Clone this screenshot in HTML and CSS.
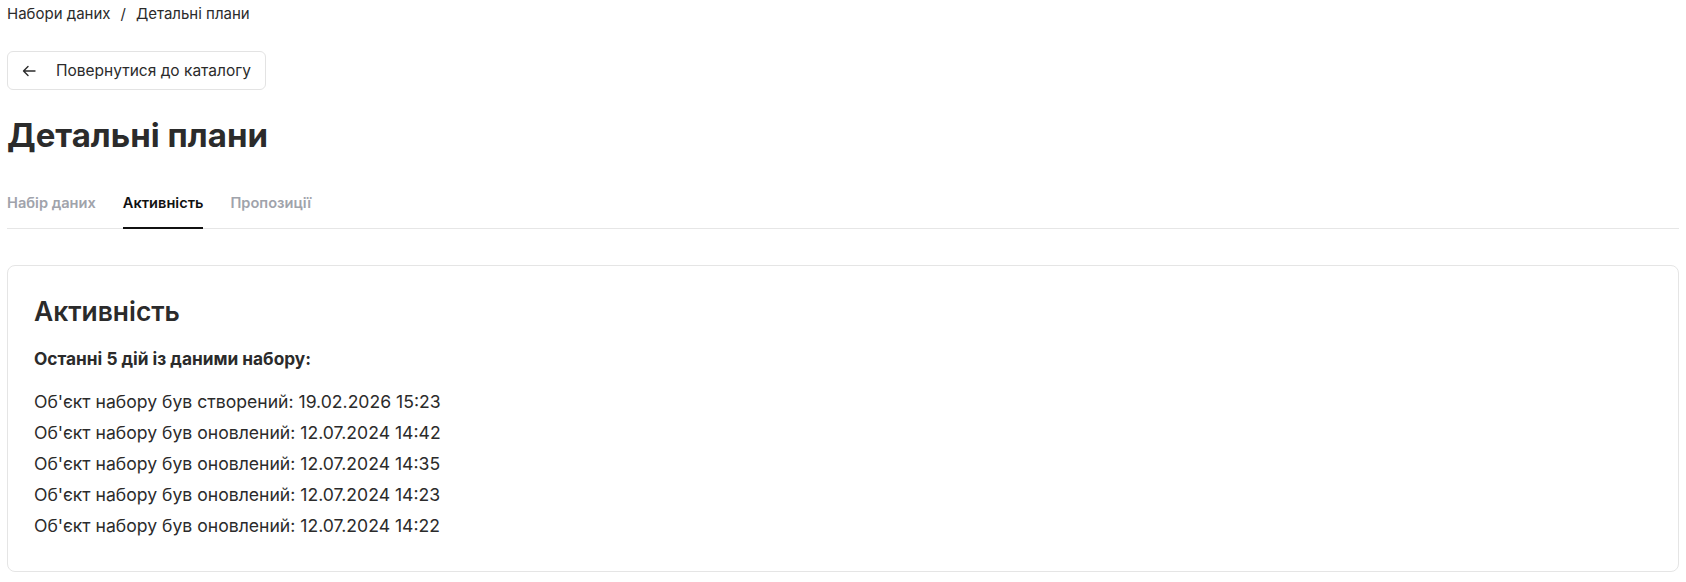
FILE: index.html
```html
<!DOCTYPE html>
<html lang="uk">
<head>
<meta charset="utf-8">
<title>Детальні плани</title>
<link rel="stylesheet" href="styles.css">
</head>
<body>
<div class="page">
  <nav class="breadcrumb">
    <span>Набори даних</span>
    <span class="sep">/</span>
    <span>Детальні плани</span>
  </nav>
  <button class="back-btn" type="button">
    <svg class="back-icon" width="16" height="16" viewBox="0 0 16 16" fill="none" stroke="currentColor" stroke-width="1.4" stroke-linecap="round" stroke-linejoin="round"><path d="M14 8H2.5M7 3.5L2.5 8L7 12.5"/></svg>
    <span>Повернутися до каталогу</span>
  </button>
  <h1 class="title">Детальні плани</h1>
  <div class="tabs">
    <div class="tab">Набір даних</div>
    <div class="tab active">Активність</div>
    <div class="tab">Пропозиції</div>
  </div>
  <section class="card">
    <h2 class="card-title">Активність</h2>
    <p class="card-sub">Останні 5 дій із даними набору:</p>
    <ul class="activity">
      <li>Об'єкт набору був створений: 19.02.2026 15:23</li>
      <li>Об'єкт набору був оновлений: 12.07.2024 14:42</li>
      <li>Об'єкт набору був оновлений: 12.07.2024 14:35</li>
      <li>Об'єкт набору був оновлений: 12.07.2024 14:23</li>
      <li>Об'єкт набору був оновлений: 12.07.2024 14:22</li>
    </ul>
  </section>
</div>
</body>
</html>
```
FILE: styles.css
```css
* { box-sizing: border-box; }
html, body { margin: 0; padding: 0; background: #fff; }
body {
  font-family: Inter, "Noto Sans", "Liberation Sans", sans-serif;
  color: #2b2b2b;
}
.page { padding: 0 7px; }
.breadcrumb {
  display: flex;
  gap: 10px;
  font-size: 15px;
  line-height: 24px;
  padding-top: 2px;
  color: #2b2b2b;
}
.back-btn {
  margin-top: 25px;
  display: flex;
  align-items: center;
  gap: 19px;
  height: 39px;
  padding: 0 14px 0 13px;
  background: #fff;
  border: 1px solid #e3e3e3;
  border-radius: 6px;
  font-family: inherit;
  font-size: 15.5px;
  color: #2b2b2b;
}
.back-icon { flex: none; }
.title {
  margin: 25px 0 0;
  font-size: 33px;
  line-height: 40px;
  font-weight: 700;
  color: #2b2b2b;
}
.tabs {
  margin-top: 38px;
  display: flex;
  gap: 27px;
  border-bottom: 1px solid #e6e6e6;
}
.tab {
  font-size: 14.6px;
  line-height: 20px;
  font-weight: 600;
  color: #a0a3ab;
  padding-bottom: 14px;
  border-bottom: 2px solid transparent;
  margin-bottom: -1px;
}
.tab.active {
  color: #111;
  border-bottom-color: #111;
}
.card {
  margin-top: 36px;
  border: 1px solid #e5e5e5;
  border-radius: 8px;
  padding: 28px 26px 30px;
  background: #fff;
}
.card-title {
  margin: 0;
  font-size: 26.4px;
  line-height: 34px;
  font-weight: 600;
  color: #2b2b2b;
}
.card-sub {
  margin: 19px 0 0;
  font-size: 17.3px;
  line-height: 24px;
  font-weight: 700;
}
.activity {
  list-style: none;
  margin: 15px 0 0;
  padding: 0;
  font-size: 17.6px;
  line-height: 31px;
}
```
